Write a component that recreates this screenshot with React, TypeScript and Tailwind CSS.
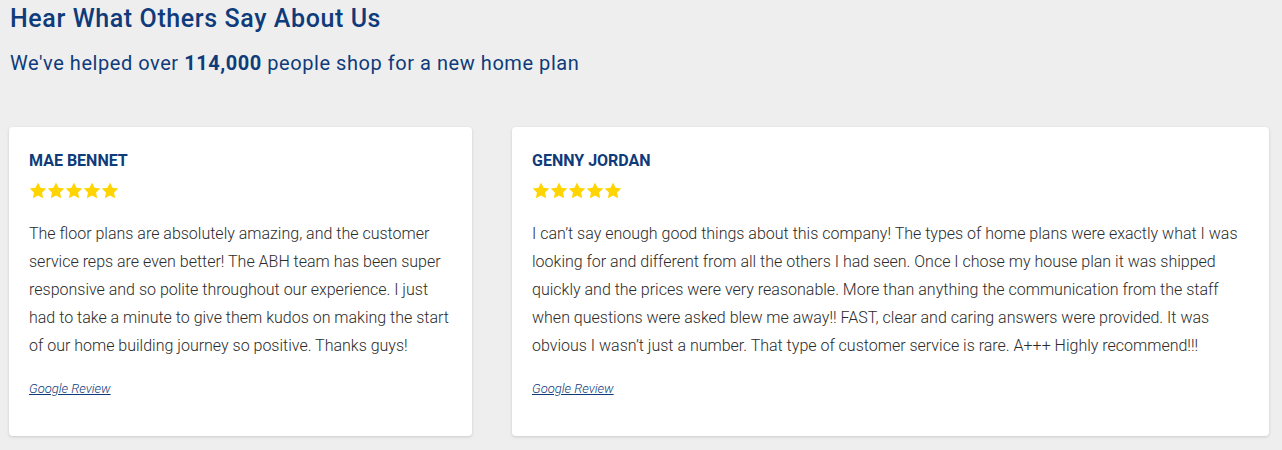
const reviews = [
  {
    name: "MAE BENNET",
    width: "w-[463px]",
    text: "The floor plans are absolutely amazing, and the customer service reps are even better! The ABH team has been super responsive and so polite throughout our experience. I just had to take a minute to give them kudos on making the start of our home building journey so positive. Thanks guys!",
  },
  {
    name: "GENNY JORDAN",
    width: "w-[757px]",
    text: "I can’t say enough good things about this company! The types of home plans were exactly what I was looking for and different from all the others I had seen. Once I chose my house plan it was shipped quickly and the prices were very reasonable. More than anything the communication from the staff when questions were asked blew me away!! FAST, clear and caring answers were provided. It was obvious I wasn’t just a number. That type of customer service is rare. A+++ Highly recommend!!!",
  },
];

function Star() {
  return (
    <svg width="18" height="17" viewBox="0 0 24 23" className="block">
      <path
        d="M12 0.8l3.4 7.1 7.8 1-5.7 5.4 1.4 7.7L12 18.3l-6.9 3.7 1.4-7.7L0.8 8.9l7.8-1z"
        fill="#ffd400"
      />
    </svg>
  );
}

export default function App() {
  return (
    <div
      className="min-h-[450px] bg-[#eeeeee] px-[9px] pt-[4px] pb-4 text-[#0f3b7a]"
      style={{ fontFamily: "Roboto, 'Liberation Sans', sans-serif" }}
    >
      <h2 className="pl-[1px] text-[25px] font-medium leading-[30px] tracking-[0.6px]">
        Hear What Others Say About Us
      </h2>
      <p className="mt-[17px] pl-[1px] text-[20px] leading-[24px] tracking-[0.55px]">
        We've helped over <span className="font-bold">114,000</span> people shop
        for a new home plan
      </p>

      <div className="mt-[52px] flex gap-[40px]">
        {reviews.map((r) => (
          <div
            key={r.name}
            className={`${r.width} h-[309px] rounded-[4px] bg-white pl-[20px] pr-[22px] pt-[24px] shadow-[0_1px_3px_rgba(0,0,0,0.15)]`}
          >
            <h3 className="text-[16px] font-bold leading-[20px] text-[#0f3b7a]">
              {r.name}
            </h3>
            {/* Rating */}
            <div className="mt-[11px] flex">
              <Star />
              <Star />
              <Star />
              <Star />
              <Star />
            </div>
            <p className="mt-[21px] text-[16px] font-light leading-[28px] text-[#2b2b2b]">
              {r.text}
            </p>
            <a
              href="#"
              className="mt-[21px] inline-block text-[13px] italic font-light leading-[16px] text-[#0f3b7a] underline"
            >
              Google Review
            </a>
          </div>
        ))}
      </div>
    </div>
  );
}
